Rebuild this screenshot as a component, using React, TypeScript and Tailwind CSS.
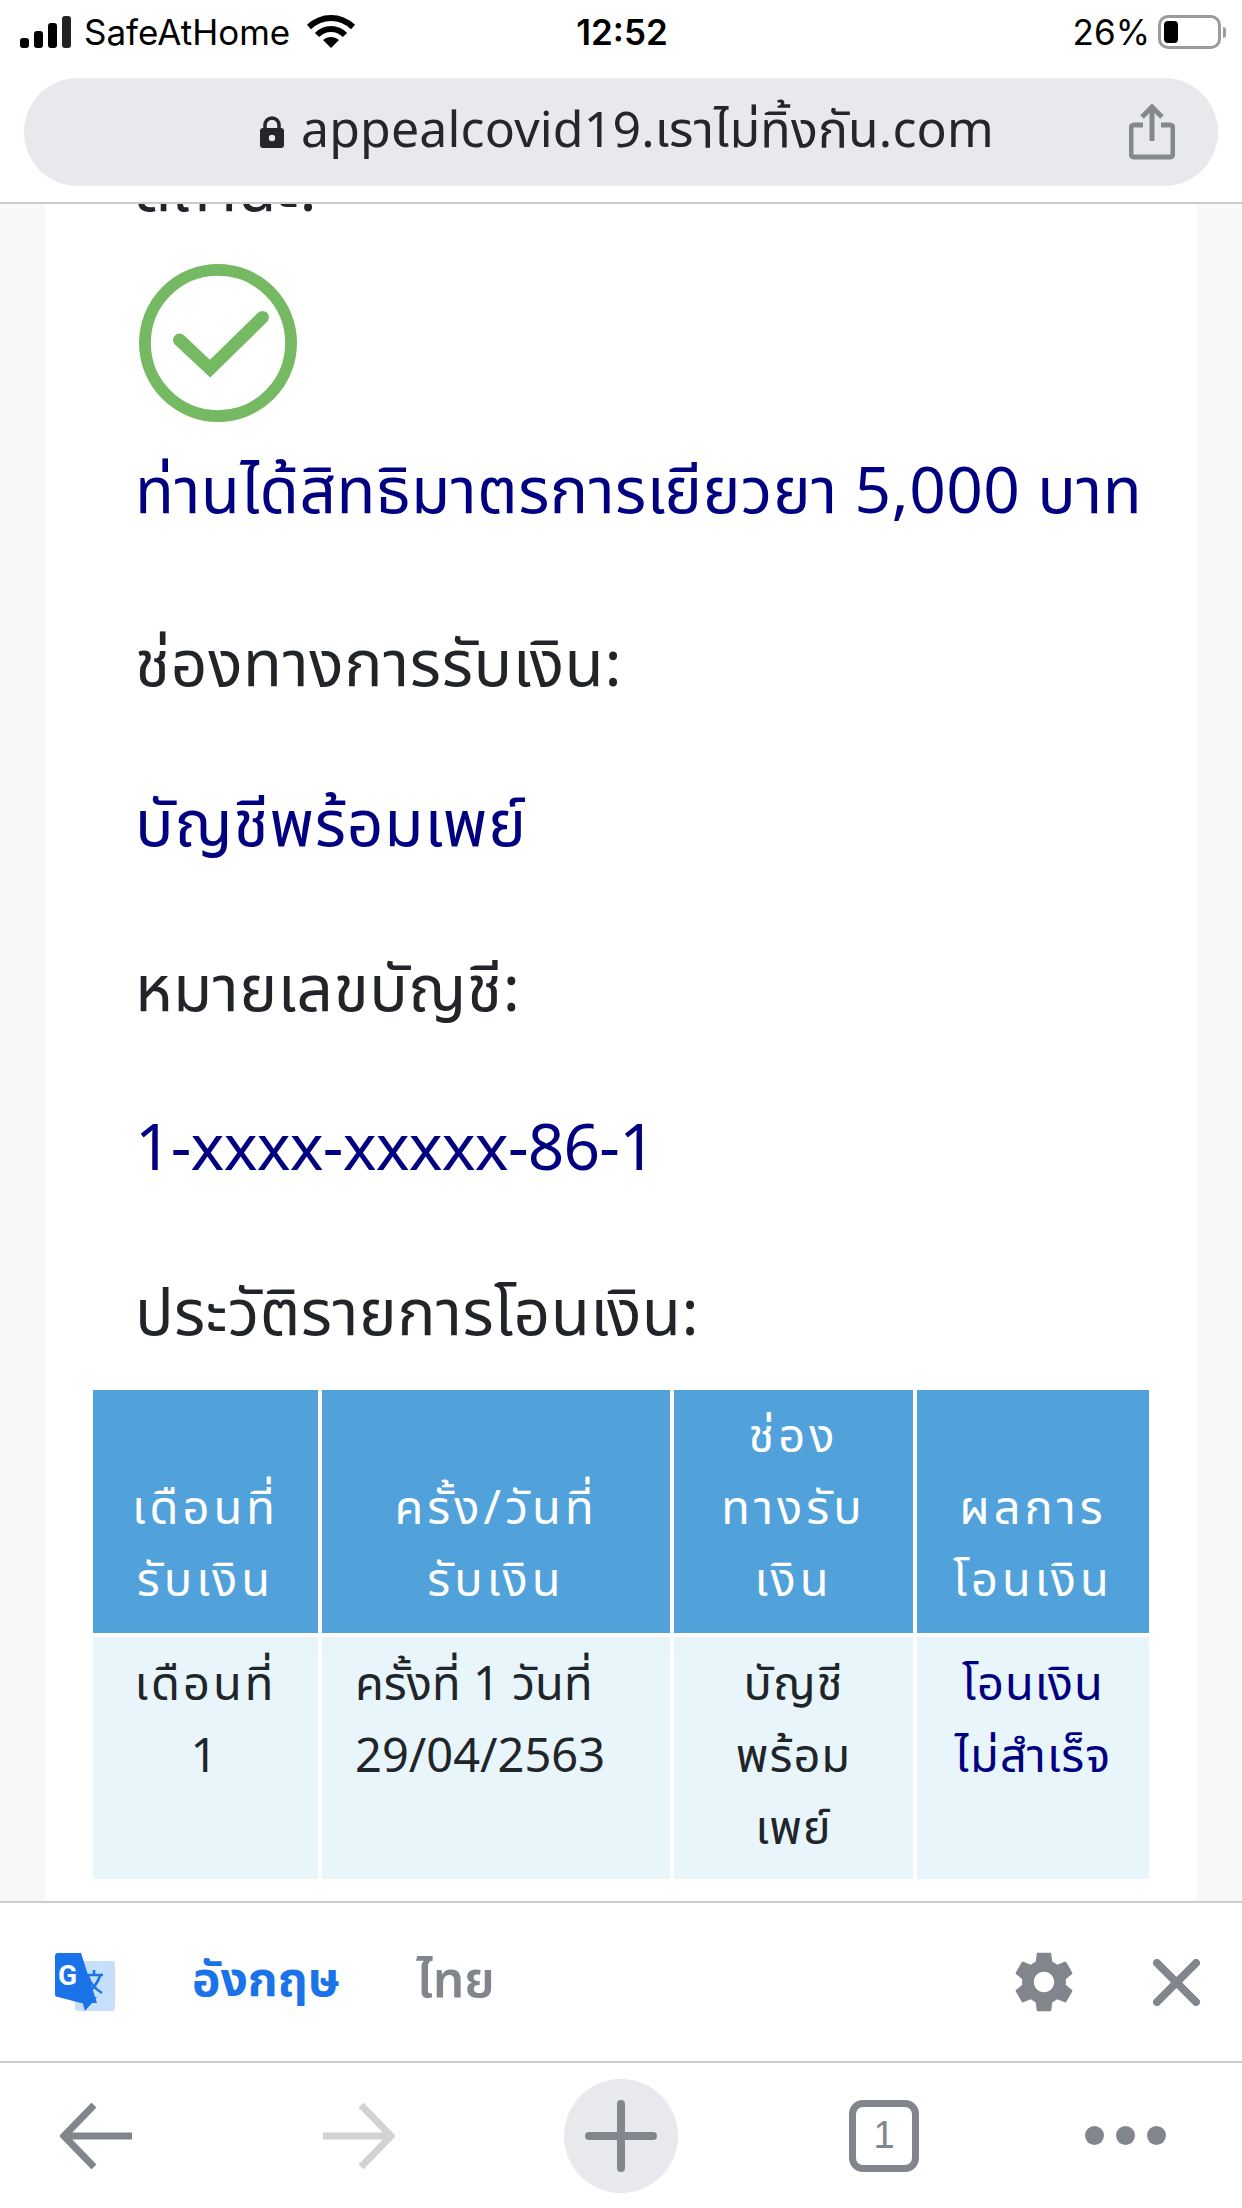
import React from 'react';

const THAI = "font-['Noto_Sans_Thai','Noto_Sans','Roboto','DejaVu_Sans',sans-serif]";

const StatusBar = () => (
  <div className="h-[64px] flex items-center pl-[20px] pr-[16px] text-black font-['Inter',sans-serif] text-[35px]">
    <svg width="52" height="32" viewBox="0 0 52 32" fill="#000">
      <rect x="0" y="22" width="9" height="10" rx="3" />
      <rect x="14" y="15" width="9" height="17" rx="3" />
      <rect x="28" y="7" width="9" height="25" rx="3" />
      <rect x="42" y="0" width="9" height="32" rx="3" fill="#222" />
    </svg>
    <span className="ml-[12px] w-[210px] whitespace-nowrap">SafeAtHome</span>
    <svg className="ml-[12px]" width="50" height="34" viewBox="0 0 50 34" fill="none" stroke="#000" strokeWidth="6">
      <path d="M3 12 C16 0 34 0 47 12" />
      <path d="M11 20 C19 12 31 12 39 20" />
      <path d="M25 33 L17 25 C22 21 28 21 33 25 Z" fill="#000" stroke="none" />
    </svg>
    <span className="ml-[217px] font-semibold w-[98px] text-center">12:52</span>
    <span className="ml-auto">26%</span>
    <div className="ml-[8px] w-[63px] h-[34px] border-[3px] border-[#9b9b9b] rounded-[10px] p-[3px]">
      <div className="w-[14px] h-full bg-black rounded-[4px]" />
    </div>
    <div className="ml-[2px] w-[3px] h-[11px] bg-[#9b9b9b] rounded-r-full" />
  </div>
);

const UrlBar = () => (
  <div className="h-[140px] px-[24px] pt-[14px] border-b-[2px] border-[#cccccc]">
    <div className="h-[108px] rounded-[54px] bg-[#e8e9ed] flex items-center pl-[236px] pr-[43px]">
      <svg width="24" height="32" viewBox="0 0 24 32">
        <path d="M5 13 V9 a7 7 0 0 1 14 0 V13" fill="none" stroke="#24262a" strokeWidth="3.5" />
        <rect x="0" y="12" width="24" height="20" rx="3" fill="#24262a" />
        <circle cx="12" cy="22" r="3.2" fill="#e8e9ed" />
      </svg>
      <span className={`ml-[17px] text-[50px] tracking-[0.15px] leading-none text-[#24262a] ${THAI}`}>appealcovid19.เราไม่ทิ้งกัน.com</span>
      <svg className="ml-auto" width="46" height="56" viewBox="0 0 46 56" fill="none" stroke="#83888b" strokeWidth="5">
        <path d="M14 21 H5 a3 3 0 0 0 -3 3 V50 a3 3 0 0 0 3 3 H41 a3 3 0 0 0 3 -3 V24 a3 3 0 0 0 -3 -3 H32" />
        <path d="M23 37 V3 M13 13 L23 3 L33 13" />
      </svg>
    </div>
  </div>
);

const Para = ({ navy, className, children }: { navy?: boolean; className?: string; children: React.ReactNode }) => (
  <p className={`text-[64px] leading-[72px] whitespace-nowrap ${navy ? 'text-[#000080]' : 'text-[#212529]'} ${className ?? 'tracking-[0.5px]'}`}>{children}</p>
);

const Head = ({ children }: { children: React.ReactNode }) => (
  <div className="bg-[#51a2da] text-white text-center tracking-[4px] flex flex-col justify-end pt-[12px] pb-[15px]">{children}</div>
);

const Cell = ({ className, children }: { className?: string; children: React.ReactNode }) => (
  <div className={`bg-[#e8f5fb] pt-[13px] pb-[13px] ${className ?? ''}`}>{children}</div>
);

const Line = ({ children }: { children: React.ReactNode }) => <div className="h-[72px] leading-[72px] whitespace-nowrap">{children}</div>;

const TransferTable = () => (
  <div className="grid grid-cols-[225px_348px_239px_232px] gap-[4px] text-[47px] text-[#212529] mt-[38px] ml-[48px]">
    <Head><Line>เดือนที่</Line><Line>รับเงิน</Line></Head>
    <Head><Line>ครั้ง/วันที่</Line><Line>รับเงิน</Line></Head>
    <Head><Line>ช่อง</Line><Line>ทางรับ</Line><Line>เงิน</Line></Head>
    <Head><Line>ผลการ</Line><Line>โอนเงิน</Line></Head>
    <Cell className="text-center tracking-[3px]"><Line>เดือนที่</Line><Line>1</Line></Cell>
    <Cell className="pl-[33px]"><Line>ครั้งที่ 1 วันที่</Line><Line>29/04/2563</Line></Cell>
    <Cell className="text-center tracking-[1px]"><Line>บัญชี</Line><Line>พร้อม</Line><Line>เพย์</Line></Cell>
    <Cell className="text-center tracking-[1px] text-[#000080]"><Line>โอนเงิน</Line><Line>ไม่สำเร็จ</Line></Cell>
  </div>
);

const Content = () => (
  <div className="flex-1 min-h-0 overflow-hidden bg-[#f8f8f8] px-[45px]">
    <div className={`bg-white h-full flow-root ${THAI}`}>
      <div className="pl-[90px] -mt-[48px]">
        <Para>สถานะ:</Para>
        <svg className="mt-[35px] ml-[4px]" width="158" height="160" viewBox="0 0 160 160" fill="none" stroke="#75b963">
          <circle cx="80" cy="80" r="74" strokeWidth="12" />
          <path d="M41 77 L72 106 L125 54" strokeWidth="13" strokeLinecap="round" />
        </svg>
        <Para navy className="mt-[35px] tracking-[0.4px]">ท่านได้สิทธิมาตรการเยียวยา 5,000 บาท</Para>
        <Para className="mt-[101px] tracking-[0.6px]">ช่องทางการรับเงิน:</Para>
        <Para navy className="mt-[88px] tracking-[0.8px]">บัญชีพร้อมเพย์</Para>
        <Para className="mt-[93px] tracking-[0.5px]">หมายเลขบัญชี:</Para>
        <Para navy className="mt-[87px] -tracking-[0.8px]">1-xxxx-xxxxx-86-1</Para>
        <Para className="mt-[93px] tracking-[0.4px]">ประวัติรายการโอนเงิน:</Para>
      </div>
      <TransferTable />
    </div>
  </div>
);

const TranslateBar = () => (
  <div className={`h-[162px] border-y-[2px] border-[#cccccc] flex items-center pl-[55px] pr-[42px] bg-white ${THAI}`}>
    <svg width="60" height="58" viewBox="0 0 60 58">
      <rect x="20" y="8" width="40" height="50" rx="3" fill="#c6dffa" />
      <path d="M3 0 H26 L42 50 H26 L3 44 a3 3 0 0 1 -3 -3 V3 a3 3 0 0 1 3 -3 Z" fill="#1a73e8" />
      <path d="M30 58 L42 44 H26 Z" fill="#1a73e8" />
      <text x="3" y="32" fontSize="28" fontWeight="700" fill="#fff" fontFamily="Roboto, sans-serif">G</text>
      <path d="M30 22 H48 M39 17 V23 M33 23 C36 33 42 37 47 40 M45 23 C42 31 38 36 33 40" stroke="#1a73e8" strokeWidth="2.6" fill="none" />
    </svg>
    <span className="ml-[77px] text-[48px] font-bold text-[#1a73e8]">อังกฤษ</span>
    <span className="ml-[76px] text-[50px] font-semibold text-[#80868b]">ไทย</span>
    <svg className="ml-auto" width="70" height="70" viewBox="0 0 24 24" fill="#80868b">
      <path d="M19.43 12.98c.04-.32.07-.64.07-.98s-.03-.66-.07-.98l2.11-1.65c.19-.15.24-.42.12-.64l-2-3.46c-.12-.22-.39-.3-.61-.22l-2.49 1c-.52-.4-1.08-.73-1.69-.98l-.38-2.65C14.46 2.18 14.25 2 14 2h-4c-.25 0-.46.18-.49.42l-.38 2.65c-.61.25-1.17.59-1.69.98l-2.49-1c-.23-.09-.49 0-.61.22l-2 3.46c-.13.22-.07.49.12.64l2.11 1.65c-.04.32-.07.65-.07.98s.03.66.07.98l-2.11 1.65c-.19.15-.24.42-.12.64l2 3.46c.12.22.39.3.61.22l2.49-1c.52.4 1.08.73 1.69.98l.38 2.65c.03.24.24.42.49.42h4c.25 0 .46-.18.49-.42l.38-2.65c.61-.25 1.17-.59 1.69-.98l2.49 1c.23.09.49 0 .61-.22l2-3.46c.12-.22.07-.49-.12-.64l-2.11-1.65zM12 15.5c-1.93 0-3.5-1.57-3.5-3.5s1.57-3.5 3.5-3.5 3.5 1.57 3.5 3.5-1.57 3.5-3.5 3.5z" />
    </svg>
    <svg className="ml-[74px]" width="47" height="47" viewBox="0 0 47 47" stroke="#80868b" strokeWidth="8" strokeLinecap="round">
      <path d="M4 4 L43 43 M43 4 L4 43" />
    </svg>
  </div>
);

const BottomBar = () => (
  <div className="flex-none h-[145px] flex items-center pl-[60px] bg-white">
    <svg width="72" height="66" viewBox="0 0 72 66" fill="none" stroke="#80868b" strokeWidth="7">
      <path d="M72 33 H4 M34 2 L4 33 L34 64" />
    </svg>
    <svg className="ml-[191px]" width="72" height="66" viewBox="0 0 72 66" fill="none" stroke="#d2d2d2" strokeWidth="7">
      <path d="M0 33 H68 M38 2 L68 33 L38 64" />
    </svg>
    <div className="ml-[169px] w-[114px] h-[114px] rounded-full bg-[#e8e9ed] flex items-center justify-center">
      <svg width="72" height="72" viewBox="0 0 72 72" stroke="#80868b" strokeWidth="8" strokeLinecap="round">
        <path d="M36 4 V68 M4 36 H68" />
      </svg>
    </div>
    <div className="ml-[171px] w-[70px] h-[72px] border-[7px] border-[#80868b] rounded-[14px] flex items-center justify-center text-[38px] text-[#80868b] font-['Liberation_Sans',sans-serif]">1</div>
    <div className="ml-[166px] flex gap-[12px]">
      <div className="w-[19px] h-[19px] rounded-full bg-[#80868b]" />
      <div className="w-[19px] h-[19px] rounded-full bg-[#80868b]" />
      <div className="w-[19px] h-[19px] rounded-full bg-[#80868b]" />
    </div>
  </div>
);

export default function App() {
  return (
    <div className="w-[1242px] h-[2208px] flex flex-col bg-white overflow-hidden">
      <StatusBar />
      <UrlBar />
      <Content />
      <TranslateBar />
      <BottomBar />
    </div>
  );
}
